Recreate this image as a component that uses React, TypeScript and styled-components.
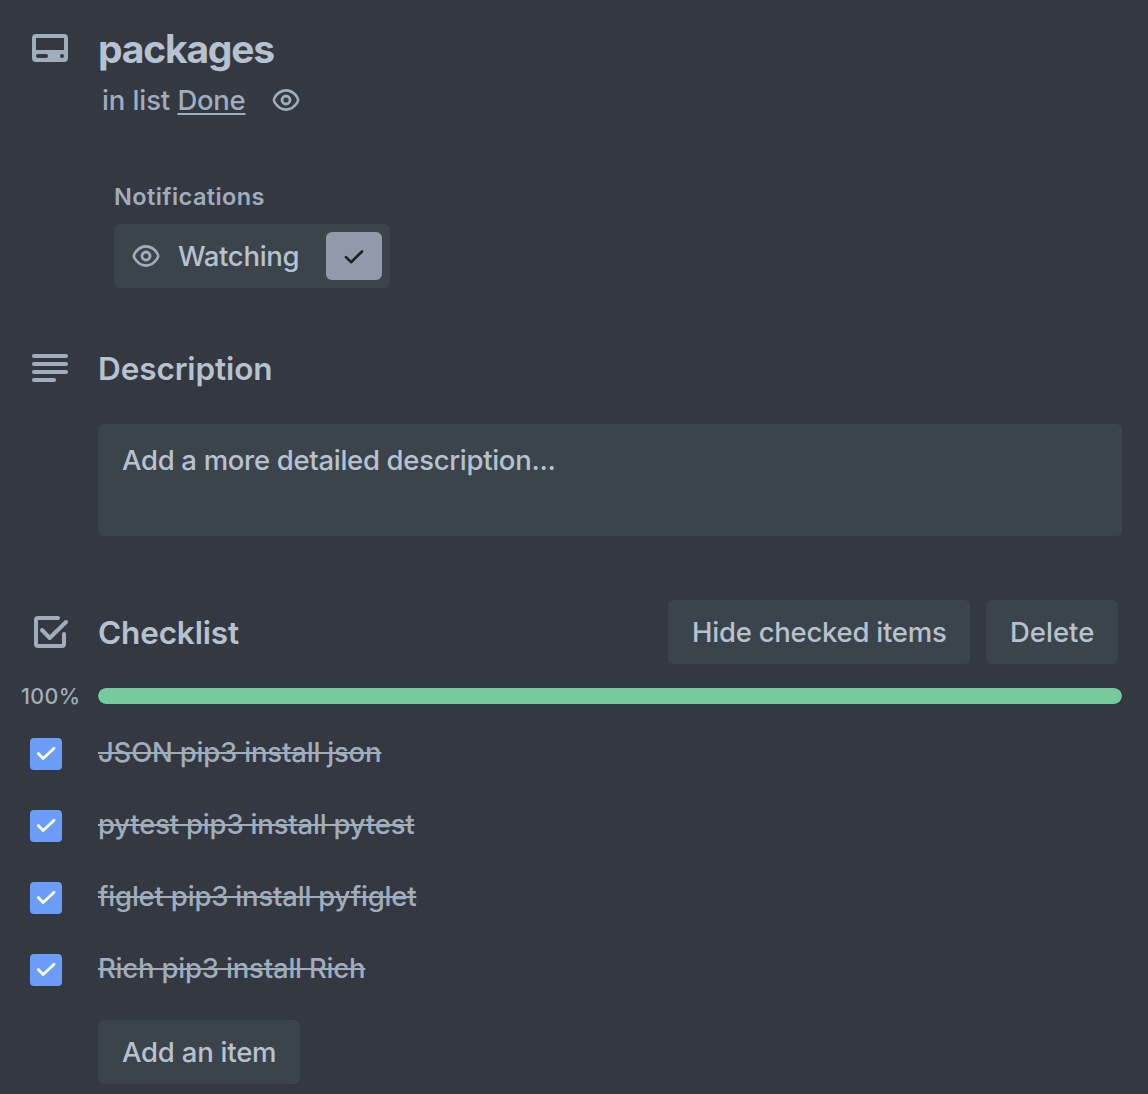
import React from "react";
import styled, { createGlobalStyle } from "styled-components";

const c = {
  page: "#343840",
  surface: "#3c444b",
  text: "#b6c2cf",
  subtle: "#9fadbc",
  toggle: "#8f9bab",
  ink: "#1d2125",
  blue: "#6a9cf8",
  green: "#75cb9c",
};

const GlobalStyle = createGlobalStyle`
  *, *::before, *::after { box-sizing: border-box; }
  body {
    margin: 0;
    background: ${c.page};
    color: ${c.text};
    font-family: Inter, "Liberation Sans", sans-serif;
    font-size: 27.5px;
    font-weight: 500;
    line-height: 40px;
    -webkit-font-smoothing: antialiased;
  }
  h2, h3, h4, p, ul { margin: 0; padding: 0; }
  button { font: inherit; color: inherit; border: 0; margin: 0; padding: 0; }
`;

const Text = styled.span<{ $ls?: number }>`
  letter-spacing: ${(p) => p.$ls ?? -0.2}px;
  white-space: nowrap;
`;

const Card = styled.main`
  display: flex;
  flex-direction: column;
  height: 1094px;
  padding: 24px 26px 0 0;
  overflow: hidden;
`;

const Row = styled.div<{ $h?: number; $mt?: number }>`
  display: grid;
  grid-template-columns: 98px minmax(0, 1fr);
  align-items: center;
  height: ${(p) => (p.$h ? `${p.$h}px` : "auto")};
  margin-top: ${(p) => p.$mt ?? 0}px;
`;

const IconCell = styled.div`
  display: flex;
  padding-left: 26px;
  color: ${c.subtle};
`;

const Title = styled.h2`
  height: 48px;
  padding-top: 1px;
  font-size: 39px;
  line-height: 48px;
  font-weight: 700;
`;

const Heading = styled.h3`
  height: 40px;
  padding-top: 1px;
  font-size: 31.5px;
  line-height: 40px;
  font-weight: 600;
`;

const SubLine = styled.div`
  display: flex;
  align-items: center;
  gap: 24px;
  height: 40px;
  margin: 8px 0 0 102px;
  color: ${c.subtle};
`;

const ListLink = styled.a`
  text-decoration: underline;
  text-decoration-thickness: 2px;
  text-underline-offset: 3px;
`;

const Notifications = styled.section`
  margin: 64px 0 0 114px;
`;

const SmallHeading = styled.h4`
  height: 40px;
  padding-top: 1px;
  font-size: 23.5px;
  line-height: 24px;
  font-weight: 600;
  color: ${c.subtle};
`;

const WatchButton = styled.button`
  display: flex;
  align-items: center;
  width: 276px;
  height: 64px;
  padding: 0 8px 0 16px;
  border-radius: 6px;
  background: ${c.surface};
`;

const WatchLabel = styled.span`
  flex: 1;
  padding-left: 16px;
  text-align: left;
`;

const EyeBox = styled.span`
  display: flex;
  color: ${c.subtle};
`;

const CheckBadge = styled.span`
  display: flex;
  align-items: center;
  justify-content: center;
  width: 56px;
  height: 48px;
  border-radius: 6px;
  background: ${c.toggle};
  color: ${c.ink};
`;

const DescriptionField = styled.div`
  height: 112px;
  margin: 32px 0 0 98px;
  padding: 16px 24px;
  border-radius: 6px;
  background: ${c.surface};
`;

const ChecklistBar = styled.div`
  display: flex;
  align-items: center;
  gap: 16px;
  padding-right: 4px;
`;

const GrowHeading = styled(Heading)`
  flex: 1;
`;

const Button = styled.button<{ $w: number }>`
  width: ${(p) => p.$w}px;
  height: 64px;
  padding: 0 0 0 24px;
  border-radius: 6px;
  background: ${c.surface};
  text-align: left;
`;

const Percent = styled.span`
  padding-left: 21px;
  font-size: 21.5px;
  line-height: 24px;
  color: ${c.subtle};
`;

const Track = styled.div`
  height: 16px;
  border-radius: 8px;
  background: ${c.surface};
  overflow: hidden;
`;

const Fill = styled.div`
  height: 100%;
  border-radius: 8px;
  background: ${c.green};
`;

const Items = styled.ul`
  list-style: none;
  margin-top: 24px;
`;

const Item = styled.li`
  display: grid;
  grid-template-columns: 98px minmax(0, 1fr);
  align-items: start;
  height: 72px;
`;

const Checkbox = styled.span`
  display: flex;
  align-items: center;
  justify-content: center;
  width: 32px;
  height: 32px;
  margin: 6px 0 0 30px;
  border-radius: 4px;
  background: ${c.blue};
  color: #fff;
`;

const ItemText = styled(Text)`
  justify-self: start;
  color: ${c.subtle};
  text-decoration: line-through;
  text-decoration-thickness: 2px;
`;

const AddRow = styled.div`
  padding-left: 98px;
`;

const CardIcon = () => (
  <svg width="48" height="48" viewBox="0 0 48 48" fill="none">
    <path
      fill="currentColor"
      fillRule="evenodd"
      d="M10 10h28a4 4 0 0 1 4 4v20a4 4 0 0 1-4 4H10a4 4 0 0 1-4-4V14a4 4 0 0 1 4-4Zm0 4v12h28V14H10Zm2 16a2 2 0 0 0 0 4h8a2 2 0 0 0 0-4h-8Zm24 0a2 2 0 1 0 0 4 2 2 0 0 0 0-4Z"
    />
  </svg>
);

const LinesIcon = () => (
  <svg width="48" height="48" viewBox="0 0 48 48" fill="none" stroke="currentColor" strokeWidth="4" strokeLinecap="round">
    <path d="M8 12h32M8 20h32M8 28h32M8 36h20" />
  </svg>
);

const ChecklistIcon = () => (
  <svg width="48" height="48" viewBox="0 0 48 48" fill="none" stroke="currentColor" strokeWidth="4" strokeLinecap="round">
    <path d="M32 10H12a2 2 0 0 0-2 2v24a2 2 0 0 0 2 2h24a2 2 0 0 0 2-2V26" />
    <path d="M16 22l7.7 8L40 14" strokeLinejoin="round" />
  </svg>
);

const Eye = () => (
  <svg width="32" height="32" viewBox="0 0 32 32" fill="none" stroke="currentColor">
    <path strokeWidth="2.6" d="M16 6.400c4.800 0 8.900 3.100 11.500 7.400a4.300 4.300 0 0 1 0 4.400C24.900 22.500 20.800 25.600 16 25.600S7.100 22.500 4.500 18.200a4.300 4.300 0 0 1 0-4.400C7.100 9.500 11.200 6.400 16 6.400Z" />
    <circle cx="16" cy="16" r="4" strokeWidth="2.800" />
  </svg>
);

const Tick = () => (
  <svg width="24" height="24" viewBox="0 0 24 24" fill="none" stroke="currentColor" strokeWidth="2.600" strokeLinecap="round" strokeLinejoin="round">
    <path d="M4 13.200l5 5L20 7.500" />
  </svg>
);

const BoxTick = () => (
  <svg width="32" height="32" viewBox="0 0 32 32" fill="none" stroke="currentColor" strokeWidth="2.800" strokeLinecap="round" strokeLinejoin="round">
    <path d="M8.200 15.600l5 5L24 10.200" />
  </svg>
);

const items = [
  "JSON pip3 install json",
  "pytest pip3 install pytest",
  "figlet pip3 install pyfiglet",
  "Rich pip3 install Rich",
];

export default function App() {
  const done = items.length;
  const percent = Math.round((done / items.length) * 100);
  return (
    <>
      <GlobalStyle />
      <Card>
        <Row $h={48}>
          <IconCell><CardIcon /></IconCell>
          <Title><Text $ls={-1.2}>packages</Text></Title>
        </Row>
        <SubLine>
          <span>
            <Text $ls={-0.1}>in list </Text>
            <ListLink><Text $ls={-0.25}>Done</Text></ListLink>
          </span>
          <EyeBox><Eye /></EyeBox>
        </SubLine>

        <Notifications>
          <SmallHeading><Text $ls={0.42}>Notifications</Text></SmallHeading>
          <WatchButton type="button">
            <EyeBox><Eye /></EyeBox>
            <WatchLabel><Text $ls={-0.32}>Watching</Text></WatchLabel>
            <CheckBadge><Tick /></CheckBadge>
          </WatchButton>
        </Notifications>

        <Row $h={48} $mt={56}>
          <IconCell><LinesIcon /></IconCell>
          <Heading><Text $ls={-0.1}>Description</Text></Heading>
        </Row>
        <DescriptionField><Text $ls={-0.31}>Add a more detailed description...</Text></DescriptionField>

        <Row $h={64} $mt={64}>
          <IconCell><ChecklistIcon /></IconCell>
          <ChecklistBar>
            <GrowHeading><Text $ls={-0.15}>Checklist</Text></GrowHeading>
            <Button type="button" $w={302}><Text $ls={-0.25}>Hide checked items</Text></Button>
            <Button type="button" $w={132}><Text $ls={0}>Delete</Text></Button>
          </ChecklistBar>
        </Row>

        <Row $h={24} $mt={20}>
          <Percent><Text $ls={0.35}>{percent}%</Text></Percent>
          <Track><Fill style={{ width: `${percent}%` }} /></Track>
        </Row>

        <Items>
          {items.map((text) => (
            <Item key={text}>
              <Checkbox><BoxTick /></Checkbox>
              <ItemText>{text}</ItemText>
            </Item>
          ))}
        </Items>
        <AddRow>
          <Button type="button" $w={202}><Text $ls={-0.22}>Add an item</Text></Button>
        </AddRow>
      </Card>
    </>
  );
}
